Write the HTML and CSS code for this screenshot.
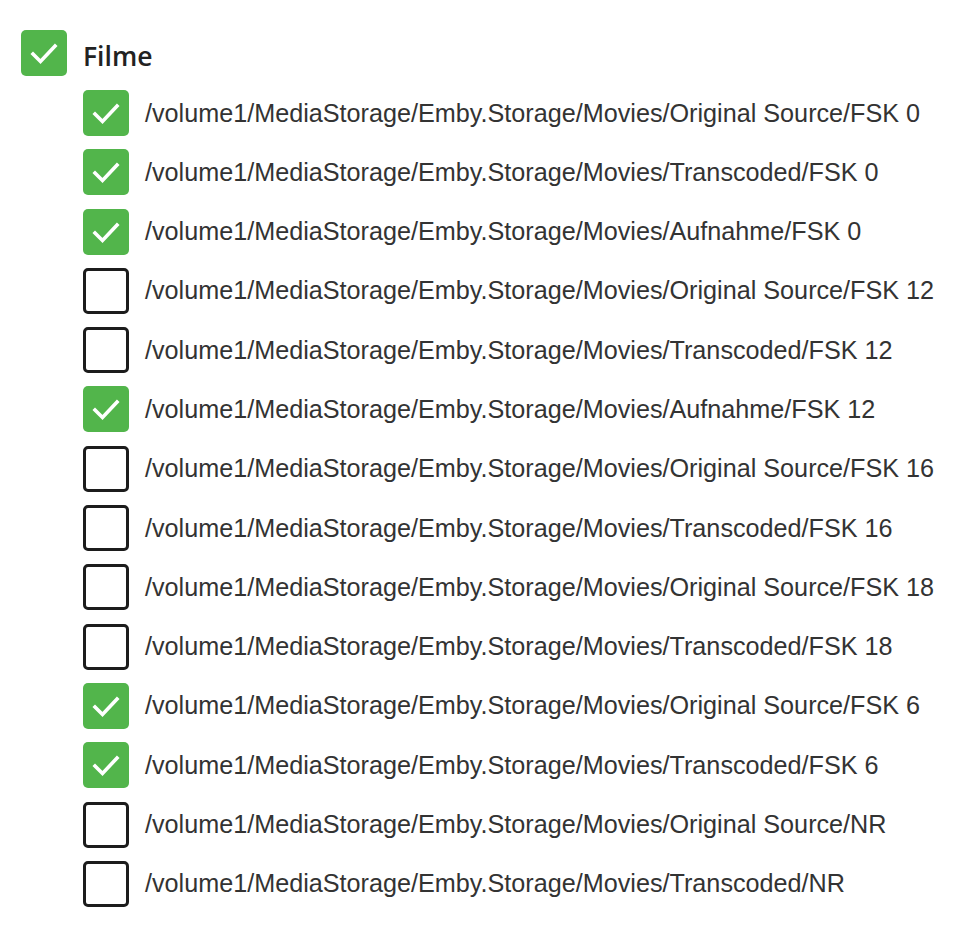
FILE: index.html
```html
<!DOCTYPE html>
<html>
<head>
<meta charset="utf-8">
<link rel="stylesheet" href="styles.css">
</head>
<body>
<div class="tree">
  <div class="row head">
    <span class="box on"><svg viewBox="0 0 46 46"><path d="M12 24 L19.5 31.5 L34 16"/></svg></span>
    <span class="title">Filme</span>
  </div>
  <div class="children">
    <div class="row"><span class="box on"><svg viewBox="0 0 46 46"><path d="M12 24 L19.5 31.5 L34 16"/></svg></span><span class="label">/volume1/MediaStorage/Emby.Storage/Movies/Original Source/FSK 0</span></div>
    <div class="row"><span class="box on"><svg viewBox="0 0 46 46"><path d="M12 24 L19.5 31.5 L34 16"/></svg></span><span class="label">/volume1/MediaStorage/Emby.Storage/Movies/Transcoded/FSK 0</span></div>
    <div class="row"><span class="box on"><svg viewBox="0 0 46 46"><path d="M12 24 L19.5 31.5 L34 16"/></svg></span><span class="label">/volume1/MediaStorage/Emby.Storage/Movies/Aufnahme/FSK 0</span></div>
    <div class="row"><span class="box"></span><span class="label">/volume1/MediaStorage/Emby.Storage/Movies/Original Source/FSK 12</span></div>
    <div class="row"><span class="box"></span><span class="label">/volume1/MediaStorage/Emby.Storage/Movies/Transcoded/FSK 12</span></div>
    <div class="row"><span class="box on"><svg viewBox="0 0 46 46"><path d="M12 24 L19.5 31.5 L34 16"/></svg></span><span class="label">/volume1/MediaStorage/Emby.Storage/Movies/Aufnahme/FSK 12</span></div>
    <div class="row"><span class="box"></span><span class="label">/volume1/MediaStorage/Emby.Storage/Movies/Original Source/FSK 16</span></div>
    <div class="row"><span class="box"></span><span class="label">/volume1/MediaStorage/Emby.Storage/Movies/Transcoded/FSK 16</span></div>
    <div class="row"><span class="box"></span><span class="label">/volume1/MediaStorage/Emby.Storage/Movies/Original Source/FSK 18</span></div>
    <div class="row"><span class="box"></span><span class="label">/volume1/MediaStorage/Emby.Storage/Movies/Transcoded/FSK 18</span></div>
    <div class="row"><span class="box on"><svg viewBox="0 0 46 46"><path d="M12 24 L19.5 31.5 L34 16"/></svg></span><span class="label">/volume1/MediaStorage/Emby.Storage/Movies/Original Source/FSK 6</span></div>
    <div class="row"><span class="box on"><svg viewBox="0 0 46 46"><path d="M12 24 L19.5 31.5 L34 16"/></svg></span><span class="label">/volume1/MediaStorage/Emby.Storage/Movies/Transcoded/FSK 6</span></div>
    <div class="row"><span class="box"></span><span class="label">/volume1/MediaStorage/Emby.Storage/Movies/Original Source/NR</span></div>
    <div class="row"><span class="box"></span><span class="label">/volume1/MediaStorage/Emby.Storage/Movies/Transcoded/NR</span></div>
  </div>
</div>
</body>
</html>
```

FILE: styles.css
```css
html, body {
  margin: 0;
  padding: 0;
  background: #fff;
}
.tree {
  padding: 30px 0 0 21px;
}
.row {
  display: flex;
  align-items: center;
  height: 46px;
}
.children {
  display: flex;
  flex-direction: column;
  gap: 13.3px;
  margin: 14px 0 0 62px;
}
.box {
  box-sizing: border-box;
  width: 46px;
  height: 46px;
  flex: 0 0 46px;
  border: 3px solid #1c1c1c;
  border-radius: 5px;
  display: flex;
}
.box.on {
  background: #52b54b;
  border: none;
}
.box svg {
  width: 46px;
  height: 46px;
}
.box svg path {
  fill: none;
  stroke: #fff;
  stroke-width: 3.6;
  stroke-linecap: square;
  stroke-linejoin: miter;
}
.title {
  margin-left: 16px;
  font-family: "Open Sans", "Noto Sans", sans-serif;
  font-weight: 600;
  font-size: 26.5px;
  color: #222;
  position: relative;
  top: 3px;
}
.label {
  margin-left: 16px;
  font-family: "Liberation Sans", Arial, sans-serif;
  font-size: 25.2px;
  color: #333;
}
```
